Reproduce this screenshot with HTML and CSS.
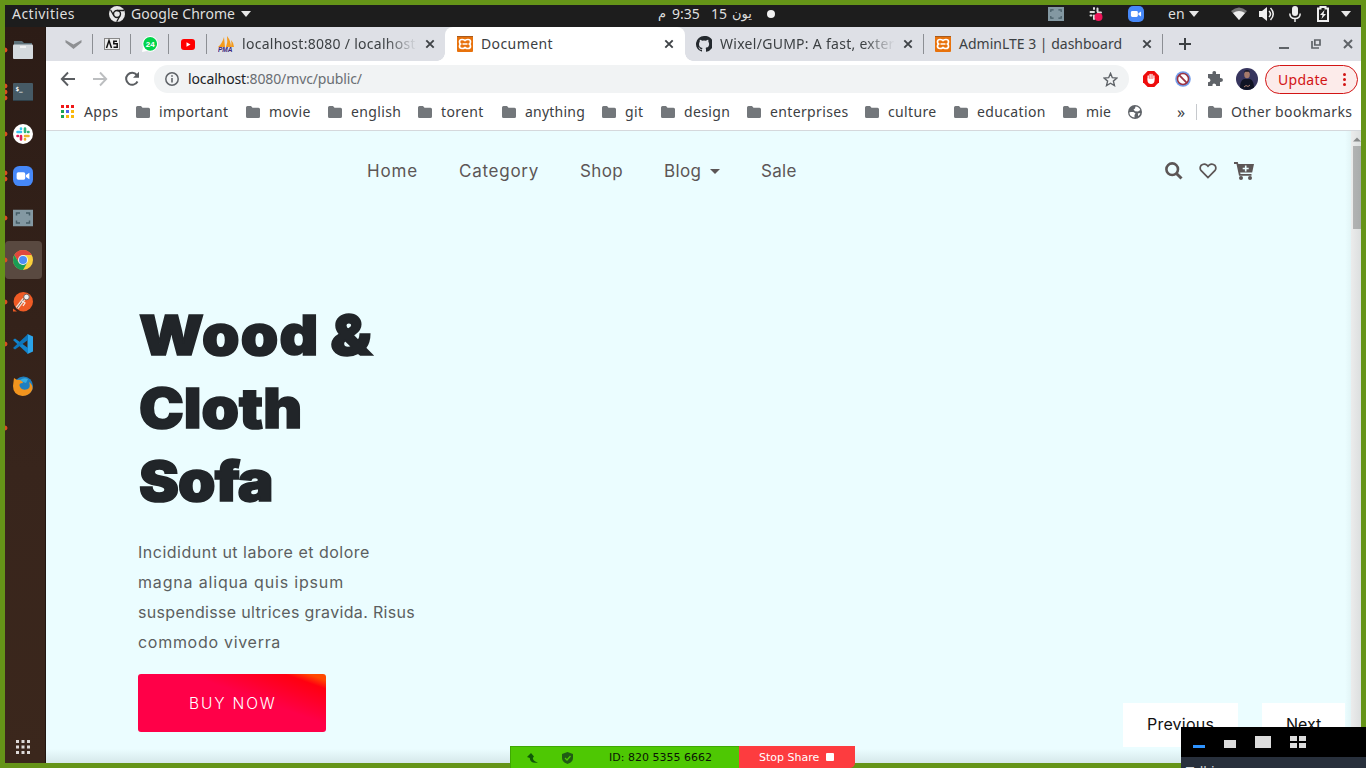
FILE: index.html
```html
<!DOCTYPE html>
<html lang="en">
<head>
<meta charset="utf-8">
<title>Document</title>
<link rel="stylesheet" href="styles.css">
</head>
<body>
<svg class="defs" aria-hidden="true">
  <symbol id="folder" viewBox="0 0 14 12"><path d="M1.500 0H5l1.500 1.700h6A1.500 1.500 0 0 1 14 3.200v7.300a1.500 1.500 0 0 1-1.500 1.500h-11A1.500 1.500 0 0 1 0 10.500V1.500A1.500 1.500 0 0 1 1.500 0z" fill="#73777b"/></symbol>
  <symbol id="close" viewBox="0 0 10 10"><path d="M1.300 1.300l7.400 7.400M8.700 1.300L1.300 8.700" stroke="#3f4347" stroke-width="1.900" fill="none"/></symbol>
  <symbol id="xampp" viewBox="0 0 16 16"><rect width="16" height="16" rx="1" fill="#e8720c"/><path d="M0 .500h16" stroke="#a75a1c"/><path d="M5 3.500q3 0 3 1.700q0-1.700 3-1.700q2.500 0 2.500 2.300q0 1.500-1 2.200q1 .7 1 2.200q0 2.300-2.500 2.300q-3 0-3-1.700q0 1.700-3 1.700q-2.500 0-2.500-2.300q0-1.500 1-2.200q-1-.7-1-2.200q0-2.300 2.500-2.300zM5.500 8h5" fill="none" stroke="#fff" stroke-width="1.700"/></symbol>
  <symbol id="caret" viewBox="0 0 10 6"><path d="M0 0h10L5 6z" fill="#e6e6e6"/></symbol>
  <symbol id="zoom" viewBox="0 0 22 22"><rect width="22" height="22" rx="7" fill="#4688f8"/><rect x="4" y="7" width="9.500" height="8" rx="1.800" fill="#fff"/><path d="M14.300 10l3.700-2.500v7L14.300 12z" fill="#fff"/></symbol>
  <symbol id="capture" viewBox="0 0 20 17"><rect width="20" height="17" fill="#8398a2"/><path d="M3.500 6V3.500H7M13 3.500h3.500V6M16.500 11v2.500H13M7 13.500H3.500V11" fill="none" stroke="#465c66" stroke-width="1.500"/></symbol>
</svg>
<div class="screen">
  <header class="topbar">
    <span class="txt activities">Activities</span>
    <div class="app-menu">
      <svg class="i16" viewBox="0 0 16 16"><circle cx="8" cy="8" r="8" fill="#e8e8e8"/><circle cx="8" cy="8" r="3.500" fill="none" stroke="#1d1d1d" stroke-width="1.400"/><path d="M8 4.500h7M5 9.800L1.600 4M11 9.800L7.700 15.700" stroke="#1d1d1d" stroke-width="1.300"/></svg>
      <span class="txt gchrome">Google Chrome</span>
      <svg class="caret" viewBox="0 0 10 6"><use href="#caret"/></svg>
    </div>
    <div class="clock"><span class="ar">م</span><span class="time">9:35</span><span class="day">15</span><span class="ar">يون</span><i class="bullet"></i></div>
    <div class="tray">
      <svg class="tr-cap" viewBox="0 0 20 17" preserveAspectRatio="none"><use href="#capture"/></svg>
      <svg class="tr-slack" viewBox="0 0 16 16"><g stroke="#ddd" stroke-width="2" stroke-linecap="round"><path d="M6 2v1M9.500 2.500v3M2.500 6H6M10 6.500h3M2.500 9.500h1M6 9.500V13"/></g><circle cx="10.500" cy="11" r="4" fill="#ee1458"/></svg>
      <svg class="i16 tr-zoom" viewBox="0 0 22 22"><use href="#zoom"/></svg>
      <span class="lang">en</span><svg class="caret" viewBox="0 0 10 6"><use href="#caret"/></svg>
      <svg class="i16 tr-wifi" viewBox="0 0 16 16"><path d="M0 5q8-7 16 0l-8 9z" fill="#777"/><path d="M2 7q6-4 12 0l-6 7z" fill="#eee"/></svg>
      <svg class="i16 tr-vol" viewBox="0 0 16 16"><path d="M0 5h3l5-4v14l-5-4H0z" fill="#eee"/><path d="M10 5q3 3 0 6M11.500 2q5.500 6 0 12" fill="none" stroke="#eee" stroke-width="1.500"/></svg>
      <svg class="i16 tr-mic" viewBox="0 0 16 16"><rect x="5" y="0" width="6" height="10" rx="3" fill="#eee"/><path d="M2.800 7.500q0 5 5.200 5t5.200-5M8 12v4" fill="none" stroke="#eee" stroke-width="1.500"/></svg>
      <svg class="i16 tr-bat" viewBox="0 0 16 16"><path d="M3 2.500h2.500V1h5v1.500H13v12.500H3z" fill="none" stroke="#eee" stroke-width="2"/><path d="M9.500 4L5 9h2.500l-1 4L11 8H8.500z" fill="#eee"/></svg>
      <svg class="caret" viewBox="0 0 10 6"><use href="#caret"/></svg>
    </div>
  </header>
  <div class="desk">
    <nav class="dock">
      <div class="dk one"><svg viewBox="0 0 20 20"><path d="M1 1h8l2 2h8v6H1z" fill="#5d7078"/><rect y="4.500" width="20" height="14.500" rx="1" fill="#d5dade"/><path d="M7 7h6" stroke="#fff" stroke-width="1.300"/></svg></div>
      <div class="dk three"><svg viewBox="0 0 20 20"><rect y="1" width="20" height="18" rx="1" fill="#465a65"/><path d="M0 18.500h20" stroke="#2f4049"/><text x="2.500" y="9" class="prompt">$_</text></svg></div>
      <div class="dk one"><svg viewBox="0 0 20 20"><circle cx="10" cy="10" r="10" fill="#fff"/><g stroke-width="2.600" stroke-linecap="round"><path d="M8 4.500V5M4.500 8H8" stroke="#36c5f0"/><path d="M12 4.500V8M15.500 8h-.5" stroke="#2eb67d"/><path d="M12 12h3.500M12 15.500V15" stroke="#ecb22e"/><path d="M8 12v3.500M4.500 12H5" stroke="#e01e5a"/></g></svg></div>
      <div class="dk two"><svg viewBox="0 0 22 22"><use href="#zoom"/></svg></div>
      <div class="dk one"><svg viewBox="0 0 20 17"><use href="#capture"/></svg></div>
      <div class="dk one active"><svg viewBox="0 0 20 20"><circle cx="10" cy="10" r="10" fill="#f9cf3c"/><path d="M1.340 5A10 10 0 0 1 18.660 5H10L5.700 12.500z" fill="#e0483e"/><path d="M1.340 5A10 10 0 0 0 10 20l4.300-7.500H5.700z" fill="#1a9c55"/><circle cx="10" cy="10" r="5" fill="#f1f1f1"/><circle cx="10" cy="10" r="4" fill="#4e8df5"/></svg></div>
      <div class="dk one"><svg viewBox="0 0 20 20"><circle cx="10.300" cy="9.700" r="9.700" fill="#ef5b25"/><path d="M0 16.500l4 3H0z" fill="#ef5b25"/><path d="M4 16l7-9" stroke="#f7d9c8" stroke-width="3.500"/><path d="M4 16l7-9" stroke="#5a4a42" stroke-width=".8"/><circle cx="13.500" cy="5" r="2.800" fill="#eee" stroke="#555" stroke-width=".8"/><path d="M9 9l3 2-2 3" stroke="#f7e9e0" fill="none" stroke-width="1.300"/></svg></div>
      <div class="dk one"><svg viewBox="0 0 20 20"><path d="M14.500 0L20 2.500v15L14.500 20z" fill="#2ba4ea"/><path d="M0 6l2-1.500L15 14v6z" fill="#1284cc"/><path d="M0 14l2 1.500L15 6V0z" fill="#0e76bb"/></svg></div>
      <div class="dk"><svg viewBox="0 0 20 20"><circle cx="10.500" cy="10" r="9.500" fill="#1f7fc0"/><path d="M1 2l3 2q5-1 6 3-5 0-3 4t8 2q3-2 1-7 4 3 3.500 7Q17 20 9.500 20 0 19 0 10z" fill="#f2941e"/><path d="M7 4q4-3 8-1l-2 4-3-1z" fill="#3aaee0"/></svg></div>
      <div class="dk one"></div>
      <div class="grow"></div>
      <svg class="apps-grid" viewBox="0 0 14 14"><path d="M0 0h3v3H0zM5.500 0h3v3h-3zM11 0h3v3h-3zM0 5.500h3v3H0zM5.500 5.500h3v3h-3zM11 5.500h3v3h-3zM0 11h3v3H0zM5.500 11h3v3h-3zM11 11h3v3h-3z" fill="#dedad8"/></svg>
    </nav>
    <main class="browser">
      <div class="tabs">
        <div class="pins">
          <div class="pin p0"><svg width="17" height="9" viewBox="0 0 17 9"><path d="M.5 0l8 4.500L16.500 0v2.500l-8 6.500-8-6.500z" fill="#8e9093"/></svg></div>
          <div class="pin"><svg width="16" height="12" viewBox="0 0 16 12"><rect x=".5" y=".5" width="15" height="11" fill="#eee" stroke="#888"/><path d="M2.500 10L5 2.500 7.500 10M13 3.200H9.800v2.600h3.400v3.400H9.500" fill="none" stroke="#111" stroke-width="1.500"/></svg></div>
          <div class="pin"><svg width="16" height="16" viewBox="0 0 16 16"><path d="M0 16l1-5A7.800 7.800 0 1 1 5 15z" fill="#fff"/><circle cx="8.200" cy="7.800" r="6.900" fill="#00d44b"/><text x="3.700" y="10.700" class="badge24">24</text></svg></div>
          <div class="pin"><svg width="14" height="11" viewBox="0 0 14 11"><rect width="14" height="11" rx="3" fill="#f00"/><path d="M5.500 3.200l4 2.300-4 2.300z" fill="#fff"/></svg></div>
        </div>
        <div class="tab t1"><svg class="i16" viewBox="0 0 16 16"><path d="M0 11Q4 8 6 1l1 10zM8 11Q10 6 9 0q4 5 4 11zM13 11q1-4 0-7 3 3 3 7z" fill="#f49b1c"/><text x="0" y="15.500" class="pma">PMA</text></svg><span class="txt fade">localhost:8080 / localhost</span><svg class="x"><use href="#close"/></svg></div>
        <div class="tab t2 on"><svg class="i16"><use href="#xampp"/></svg><span class="txt">Document</span><svg class="x"><use href="#close"/></svg></div>
        <div class="tab t3"><svg class="i16" viewBox="0 0 16 16"><path d="M8 0a8 8 0 0 0-2.500 15.600c.4.100.5-.2.500-.400v-1.500c-2 .5-2.600-.6-2.800-1.200-.3-.7-.8-1-1-1.200 1.200-.2 1.600.8 2 1.400.6.600 1.300.5 1.900.300 0-.5.200-.8.500-1.100C4.700 11.700 3 11 3 8c0-.9.300-1.600.8-2.200-.2-.8 0-1.600.1-2 .7 0 1.500.4 2.200.9a7.500 7.500 0 0 1 3.900 0c.7-.5 1.500-.9 2.200-.9.200.4.300 1.200.1 2 .5.600.8 1.300.8 2.200 0 3-1.800 3.700-3.600 3.900.4.300.5.800.5 1.500v2c0 .2.100.5.500.4A8 8 0 0 0 8 0z" fill="#24292e"/></svg><span class="txt fade">Wixel/GUMP: A fast, exter</span><svg class="x"><use href="#close"/></svg></div>
        <div class="tab t4"><svg class="i16"><use href="#xampp"/></svg><span class="txt">AdminLTE 3 | dashboard</span><svg class="x"><use href="#close"/></svg></div>
        <svg class="plus" viewBox="0 0 12 12"><path d="M6 0v12M0 6h12" stroke="#3c4043" stroke-width="2"/></svg>
        <div class="grow"></div>
        <div class="winctl"><svg width="10" height="10"><path d="M0 9h10" stroke="#5f6368" stroke-width="2"/></svg><svg width="10" height="10"><path d="M1 2v7h7M3.800 1h5.200v5H3.800z" fill="none" stroke="#5f6368" stroke-width="1.700"/></svg><svg width="10" height="10"><path d="M1 1l8 8M9 1L1 9" stroke="#5f6368" stroke-width="2"/></svg></div>
      </div>
      <div class="toolbar">
        <svg class="nv" viewBox="0 0 16 16"><path d="M15 8H2M8 1.500L1.800 8 8 14.500" fill="none" stroke="#5a5d61" stroke-width="1.900"/></svg>
        <svg class="nv" viewBox="0 0 16 16"><path d="M1 8h13M8 1.500L14.200 8 8 14.500" fill="none" stroke="#bcbec0" stroke-width="1.900"/></svg>
        <svg class="nv" viewBox="0 0 16 16"><path d="M13.500 10.500A6 6 0 1 1 12.800 4" fill="none" stroke="#5a5d61" stroke-width="2"/><path d="M15 .8v6H9z" fill="#5a5d61"/></svg>
        <div class="omni">
          <svg class="info" viewBox="0 0 14 14"><circle cx="7" cy="7" r="6.200" fill="none" stroke="#5f6368" stroke-width="1.500"/><path d="M7 6v4.500M7 3.300v1.500" stroke="#5f6368" stroke-width="1.600"/></svg>
          <span class="txt url"><b>localhost</b>:8080/mvc/public/</span>
          <svg class="star" viewBox="0 0 14 14"><path d="M7 1.300l1.700 4 4.300.4-3.300 2.800 1 4.200L7 10.500l-3.700 2.200 1-4.200L1 5.700l4.300-.4z" fill="none" stroke="#5f6368" stroke-width="1.300"/></svg>
        </div>
        <div class="exts">
          <svg width="16" height="16" viewBox="0 0 16 16"><path d="M4.700 0h6.600L16 4.700v6.600L11.300 16H4.700L0 11.300V4.700z" fill="#ee0c0c"/><path d="M5.200 8V5M7.100 7V3.500M9 7V3.500M10.900 8V5" stroke="#fff" stroke-width="1.300" stroke-linecap="round"/><path d="M4.500 7.500h7v2.500Q11 13 8 13t-3.500-3z" fill="#fff"/></svg>
          <svg width="16" height="16" viewBox="0 0 16 16"><circle cx="8" cy="8" r="7.800" fill="#739dea"/><circle cx="8" cy="8" r="5.500" fill="#fff" stroke="#9b3342" stroke-width="1.500"/><path d="M4.200 4.200l7.600 7.600" stroke="#9b3342" stroke-width="1.800"/></svg>
          <svg width="16" height="16" viewBox="0 0 16 16"><path d="M1 3h4.500q-.5-3 1.800-3T9 3h4v4q3-.2 3 2t-3 2v4H9.200q.2-2.500-2-2.500T5.500 15H1v-3.800q2.500 0 2.500-2T1 7z" fill="#5f6368"/></svg>
          <svg width="22" height="22" viewBox="0 0 22 22"><circle cx="11" cy="11" r="11" fill="#37355e"/><path d="M4 19.500q0-7 4-8.500h6q4 1.500 4 8.500-7 5-14 0z" fill="#101424"/><ellipse cx="11" cy="6.500" rx="2.800" ry="3.800" fill="#a67a6b"/><path d="M8 5q0-3 3-3t3 3l-1-1.200H9z" fill="#181a2a"/><path d="M8 19l2-1.500 2 1 2-1.500" stroke="#a67a6b" fill="none"/></svg>
        </div>
        <div class="update"><span class="txt">Update</span><svg width="3" height="13"><circle cx="1.500" cy="1.500" r="1.500"/><circle cx="1.500" cy="6.500" r="1.500"/><circle cx="1.500" cy="11.500" r="1.500"/></svg></div>
      </div>
      <div class="marks">
        <svg class="ag" viewBox="0 0 13 13"><path d="M0 0h3v3H0zM5 0h3v3H5zM10 0h3v3h-3z" fill="#f01818"/><path d="M0 5h3v3H0zM0 10h3v3H0z" fill="#1ba353"/><path d="M5 5h3v3H5z" fill="#4b66ee"/><path d="M10 5h3v3h-3zM5 10h3v3H5zM10 10h3v3h-3z" fill="#f9b90c"/></svg>
        <span class="txt m m35">Apps</span>
        <svg class="fd"><use href="#folder"/></svg><span class="txt m m70">important</span>
        <svg class="fd"><use href="#folder"/></svg><span class="txt m m42">movie</span>
        <svg class="fd"><use href="#folder"/></svg><span class="txt m m50">english</span>
        <svg class="fd"><use href="#folder"/></svg><span class="txt m m44">torent</span>
        <svg class="fd"><use href="#folder"/></svg><span class="txt m m60">anything</span>
        <svg class="fd"><use href="#folder"/></svg><span class="txt m m19">git</span>
        <svg class="fd"><use href="#folder"/></svg><span class="txt m m46">design</span>
        <svg class="fd"><use href="#folder"/></svg><span class="txt m m78">enterprises</span>
        <svg class="fd"><use href="#folder"/></svg><span class="txt m m49">culture</span>
        <svg class="fd"><use href="#folder"/></svg><span class="txt m m69">education</span>
        <svg class="fd"><use href="#folder"/></svg><span class="txt m m25">mie</span>
        <svg class="globe" viewBox="0 0 14 14"><circle cx="7" cy="7" r="7" fill="#5f6368"/><path d="M1.200 7.500L3 7h2.500l2 1.500L6.500 10v2.500Q2 12 1.200 7.500zM7.500 1.500q3.500 0 4.800 3.500L10 6.500 7 6.200 5.500 4.500 7 3.500zM9.800 8.500l2.500-.5q-.3 2-2 3.300z" fill="#fff"/></svg>
        <div class="grow"></div>
        <span class="more">»</span><i class="sep"></i>
        <svg class="fd"><use href="#folder"/></svg><span class="txt m m121">Other bookmarks</span>
      </div>
      <div class="viewport">
        <div class="shop">
          <nav class="menu">
            <span class="txt n51">Home</span><span class="txt n80">Category</span><span class="txt n43">Shop</span><span class="txt n37">Blog</span><svg class="drop" viewBox="0 0 10 5"><path d="M0 0h10L5 5z" fill="#5c5656"/></svg><span class="txt n37">Sale</span>
            <div class="grow"></div>
            <svg class="sico" viewBox="0 0 18 18"><circle cx="7.200" cy="7.200" r="5.800" fill="none" stroke="#5c5656" stroke-width="2.600"/><path d="M11.200 11.200l5.300 5.300" stroke="#5c5656" stroke-width="3"/></svg>
            <svg class="sico heart" viewBox="0 0 18 18"><path d="M9 15.600L2.200 8.700Q.2 6 2 3.500 5 .8 8 3.200l1 1 1-1q3-2.400 6 .3 1.800 2.500-.2 5.200z" fill="none" stroke="#5c5656" stroke-width="1.700"/></svg>
            <svg class="sico cart" viewBox="0 0 20 18"><path d="M0 0h3.800l.5 2H20l-1.800 8.500H6.200l.3 1.500h11v1.800H5L2.500 2H0z" fill="#5c5656"/><circle cx="7" cy="16" r="2" fill="#5c5656"/><circle cx="16" cy="16" r="2" fill="#5c5656"/><path d="M11.700 3.500v6M8.700 6.500h6" stroke="#ebfdff" stroke-width="1.600"/></svg>
          </nav>
          <section class="hero">
            <h1><span class="txt h1a">Wood &amp;</span><span class="txt h1b">Cloth</span><span class="txt h1c">Sofa</span></h1>
            <p><span class="txt pa">Incididunt ut labore et dolore</span><span class="txt pb">magna aliqua quis ipsum</span><span class="txt pc">suspendisse ultrices gravida. Risus</span><span class="txt pd">commodo viverra</span></p>
            <div class="buy"><span class="txt">BUY NOW</span></div>
          </section>
          <div class="pager"><span class="pg prev"><span class="txt">Previous</span></span><span class="pg next"><span class="txt">Next</span></span></div>
        </div>
        <div class="scroll"><svg width="8" height="5"><path d="M0 4.500l4-4 4 4z" fill="#8f8f8f"/></svg><i class="thumb"></i></div>
      </div>
    </main>
  </div>
  <div class="share">
    <div class="sg"><svg width="12" height="12" viewBox="0 0 12 12"><path d="M1 5l4-4 3 3.500L6.800 6Q7 9 12 10.500 4 12 3.800 6z" fill="#115a08"/></svg><svg width="11" height="12" viewBox="0 0 11 12"><path d="M5.500 0L11 2v4q0 4-5.500 6Q0 10 0 6V2z" fill="#205c14"/><path d="M3 6l2 2 3.500-4" fill="none" stroke="#4ec803" stroke-width="1.300"/></svg><span class="txt">ID: 820 5355 6662</span></div>
    <div class="sr"><span class="txt">Stop Share</span><i></i></div>
  </div>
  <div class="panel">
    <div class="pbar"><i class="mn"></i><i class="md"></i><i class="lg"></i><svg width="16" height="12"><path d="M0 0h7v5H0zM9 0h7v5H9zM0 7h7v5H0zM9 7h7v5H9z" fill="#dcdcdc"/></svg></div>
    <div class="talk">Talking:</div>
  </div>
</div>
</body>
</html>
```
FILE: styles.css
```css
* { box-sizing: border-box; }
html, body { margin: 0; width: 1366px; height: 768px; overflow: hidden; }
body { font-family: "Noto Sans", "DejaVu Sans", sans-serif; font-size: 14px; color: #3c4043; }
svg { display: block; flex: none; }
.defs { position: absolute; width: 0; height: 0; }
.txt { white-space: nowrap; flex: none; }
.grow { flex: 1; }
.i16 { width: 16px; height: 16px; flex: none; }
.screen { position: relative; width: 1366px; height: 768px; border: 5px solid #659418; display: flex; flex-direction: column; background: #1d1d1d; }

/* system bar */
.topbar { height: 22px; flex: none; display: flex; align-items: center; color: #dfdfdf; padding: 0 10px 5px 7px; }
.app-menu { display: flex; align-items: center; margin-left: 34px; gap: 6px; }
.activities { width: 63px; letter-spacing: .47px; }
.gchrome { width: 104px; letter-spacing: .05px; }
.caret { width: 10px; height: 6px; }
.clock { display: flex; align-items: center; margin-left: 407px; direction: ltr; }
.clock .ar { font-family: "DejaVu Sans", sans-serif; font-size: 13px; width: 14px; line-height: 18px; }
.clock .time { width: 39px; }
.clock .day { width: 21px; }
.clock .day + .ar { width: 35px; }
.bullet { width: 8px; height: 8px; border-radius: 50%; background: #f1f1f1; }
.tray { display: flex; align-items: center; margin-left: auto; }
.tr-cap { width: 16px; height: 14px; margin-right: 24px; }
.tr-slack { width: 16px; height: 16px; margin-right: 24px; }
.tr-zoom { margin-right: 24px; }
.lang { width: 21px; }
.tr-wifi { margin-left: 32px; margin-right: 12px; }
.tr-vol { margin-right: 12px; }
.tr-mic { margin-right: 12px; }
.tr-bat { margin-right: 10px; }

/* launcher */
.desk { flex: 1; display: flex; min-height: 0; }
.dock { width: 41px; flex: none; background: linear-gradient(#2c1c16, #38251c 60%, #3b271c); padding: 4px 3px 9px 0; display: flex; flex-direction: column; gap: 4px; border-right: 1px solid #221610; }
.dk { height: 38px; flex: none; padding-left: 8px; display: flex; align-items: center; border-radius: 4px; background-repeat: no-repeat; }
.dk svg { width: 20px; height: 20px; }
.dk.one { background-image: radial-gradient(circle at 0 19px, #d9501f 2px, transparent 2.800px); }
.dk.two { background-image: radial-gradient(circle at 0 16px, #d9501f 2px, transparent 2.800px), radial-gradient(circle at 0 22px, #d9501f 2px, transparent 2.800px); }
.dk.three { background-image: radial-gradient(circle at 0 13px, #d9501f 2px, transparent 2.800px), radial-gradient(circle at 0 19px, #d9501f 2px, transparent 2.800px), radial-gradient(circle at 0 25px, #d9501f 2px, transparent 2.800px); }
.dk.active { background-color: #594940; }
.prompt { font: bold 6px "DejaVu Sans Mono", monospace; fill: #fff; }
.apps-grid { width: 14px; height: 14px; margin-left: 11px; }

/* browser chrome */
.browser { flex: 1; min-width: 0; background: #fff; display: flex; flex-direction: column; }
.tabs { height: 34px; flex: none; display: flex; align-items: center; background: #dee0e6; }
.pins { display: flex; align-items: center; padding-left: 8px; }
.pin { width: 38px; height: 20px; display: flex; align-items: center; justify-content: center; border-right: 1px solid #8c8f94; }
.p0 { width: 39px; padding-left: 1px; }
.badge24 { font: bold 8px "Liberation Sans", sans-serif; fill: #fff; }
.pma { font: italic bold 6.500px "Liberation Sans", sans-serif; fill: #39257a; }
.tab { height: 34px; flex: none; display: flex; align-items: center; gap: 8px; padding-bottom: 1px; }
.tab .txt { letter-spacing: .4px; }
.tab .x { width: 10px; height: 10px; margin-left: auto; }
.t1 { width: 238px; padding-left: 11px; padding-right: 10px; }
.t2 { width: 240px; padding-left: 12px; padding-right: 11px; }
.t3, .t4 { width: 239px; padding-left: 11px; padding-right: 11px; position: relative; }
.t4 .txt { letter-spacing: 0; }
.tab.on { position: relative; background: #fff; border-radius: 8px 8px 0 0; }
.tab.on::before, .tab.on::after { content: ""; position: absolute; bottom: 0; width: 8px; height: 8px; }
.tab.on::before { right: 100%; background: radial-gradient(circle at 0 0, transparent 7.500px, #fff 8px); }
.tab.on::after { left: 100%; background: radial-gradient(circle at 100% 0, transparent 7.500px, #fff 8px); }
.t4::before, .t4::after { content: ""; position: absolute; left: -1px; top: 7px; width: 1px; height: 20px; background: #8c8f94; }
.t4::after { left: auto; right: 0; }
.tab .fade { width: 175px; letter-spacing: .28px; -webkit-mask-image: linear-gradient(90deg, #000 82%, transparent); mask-image: linear-gradient(90deg, #000 82%, transparent); }
.plus { width: 12px; height: 12px; margin-left: 16px; }
.winctl { display: flex; gap: 22px; padding-right: 8px; }
.toolbar { height: 36px; flex: none; display: flex; align-items: center; padding: 0 3px 0 14px; }
.nv { width: 16px; height: 16px; margin-right: 16px; }
.omni { width: 975px; height: 28px; margin-left: -2px; border-radius: 14px; background: #f1f3f4; display: flex; align-items: center; padding: 0 11px; }
.info { width: 14px; height: 14px; margin-right: 9px; }
.url { color: #6a6e73; letter-spacing: -.13px; padding-bottom: 2px; }
.url b { font-weight: 400; color: #202124; }
.star { width: 15px; height: 15px; margin-left: auto; }
.exts { display: flex; align-items: center; gap: 16px; margin-left: 14px; }
.exts svg:last-child { margin-left: -3px; }
.update { margin-left: 7px; width: 93px; height: 29px; border: 1px solid #d21414; border-radius: 15px; background: #fcebea; color: #d21414; fill: #d21414; display: flex; align-items: center; padding: 0 11px 0 12px; justify-content: space-between; letter-spacing: .29px; }
.marks { height: 34px; flex: none; display: flex; align-items: center; padding: 0 9px 4px 15px; border-bottom: 1px solid #d5d8dc; }
.ag { width: 13px; height: 13px; margin-right: 10px; }
.fd { width: 14px; height: 12px; margin-right: 9px; }
.m { margin-right: 17px; letter-spacing: .36px; }
.m35 { width: 35px; } .m70 { width: 70px; } .m42 { width: 42px; } .m50 { width: 50px; } .m44 { width: 44px; }
.m60 { width: 60px; letter-spacing: .22px; } .m19 { width: 19px; } .m46 { width: 46px; } .m78 { width: 78px; }
.m49 { width: 49px; } .m69 { width: 69px; } .m25 { width: 25px; letter-spacing: .13px; } .m121 { width: 121px; margin-right: 0; }
.globe { width: 14px; height: 14px; }
.more { width: 19px; font-size: 16px; line-height: 16px; }
.sep { width: 1px; height: 16px; background: #c6c9cd; margin-right: 11px; }

/* shop page */
.viewport { flex: 1; min-height: 0; display: flex; background: #ebfdff; position: relative; }
.viewport::after { content: ""; position: absolute; inset: 0; background: linear-gradient(0deg, rgba(60, 80, 80, .12), transparent 14px), linear-gradient(270deg, rgba(60, 80, 80, .13), transparent 16px); }
.shop { flex: 1; font-family: Inter, "Open Sans", sans-serif; color: #5c5656; }
.menu { display: flex; align-items: center; height: 80px; padding: 0 97px 0 321px; font-size: 17px; }
.n51 { width: 51px; margin-right: 41px; letter-spacing: .84px; }
.n80 { width: 80px; margin-right: 41px; letter-spacing: .74px; }
.n43 { width: 43px; margin-right: 41px; letter-spacing: .36px; }
.n37 { width: 37px; letter-spacing: .32px; }
.drop { width: 10px; height: 5px; margin: 0 41px 0 9px; }
.sico { width: 18px; height: 18px; }
.heart { margin: 0 17px 0 16px; }
.cart { width: 20px; }
.hero { padding: 87px 0 0 92px; }
h1 { margin: 0; padding-left: 1px; font-size: 55.500px; line-height: 73px; font-weight: 900; color: #212529; -webkit-text-stroke: 1.600px #212529; display: flex; flex-direction: column; align-items: flex-start; }
h1 .txt { transform: scaleX(1.08); transform-origin: 0 50%; }
.h1a { letter-spacing: 1.100px; word-spacing: -2px; }
.h1b { letter-spacing: 0; }
.h1c { letter-spacing: -.8px; }
p { margin: 20px 0 17px; font-size: 16px; line-height: 30px; color: #5c5f60; display: flex; flex-direction: column; align-items: flex-start; }
.pa { letter-spacing: .5px; } .pb { letter-spacing: .83px; } .pc { letter-spacing: .33px; } .pd { letter-spacing: .71px; }
.buy { width: 188px; height: 58px; border-radius: 3px; background: linear-gradient(20deg, #ff0048 60%, #ff0018 84%, #ff0010 88%, #ff4800 95%); color: #fff; font-size: 15.500px; font-weight: 300; letter-spacing: 1.850px; display: flex; align-items: center; padding-left: 51px; }
.pager { position: absolute; right: 16px; bottom: 16px; display: flex; gap: 24px; color: #111; font-size: 16px; }
.pg { height: 44px; background: #fff; display: flex; align-items: center; padding: 0 0 2px 24px; }
.prev { width: 115px; letter-spacing: .21px; }
.next { width: 83px; }
.scroll { width: 10px; background: #f4f4f4; padding: 6px 0 0 2px; display: flex; flex-direction: column; gap: 4px; }
.thumb { height: 83px; background: #bababa; }

/* screen sharing overlays */
.share { position: absolute; left: 505px; top: 741px; width: 345px; height: 22px; display: flex; font: 11px "DejaVu Sans", sans-serif; }
.sg { width: 229px; background: #4ec803; color: #0a1505; display: flex; align-items: center; padding-left: 15px; border: solid #3fa803; border-width: 1px 0 0 1px; }
.sg svg + svg { margin: 0 36px 0 24px; }
.sr { flex: 1; background: #fd3c3f; color: #fff; display: flex; align-items: center; padding-left: 20px; border-radius: 0 0 5px 0; }
.sr i { width: 8px; height: 8px; background: #fff; margin-left: 7px; border-radius: 1px; }
.panel { position: absolute; left: 1176px; top: 722px; width: 190px; height: 46px; overflow: hidden; background: #28303c; }
.pbar { height: 30px; background: #000; display: flex; align-items: flex-end; padding: 0 0 9px 12px; gap: 19px; }
.mn { width: 12px; height: 3px; background: #2e93ff; }
.md { width: 12px; height: 8px; background: #dcdcdc; }
.lg { width: 16px; height: 12px; background: #dcdcdc; }
.talk { color: #d5d8dc; font: 13px "DejaVu Sans", sans-serif; padding: 7px 0 0 5px; }
```
